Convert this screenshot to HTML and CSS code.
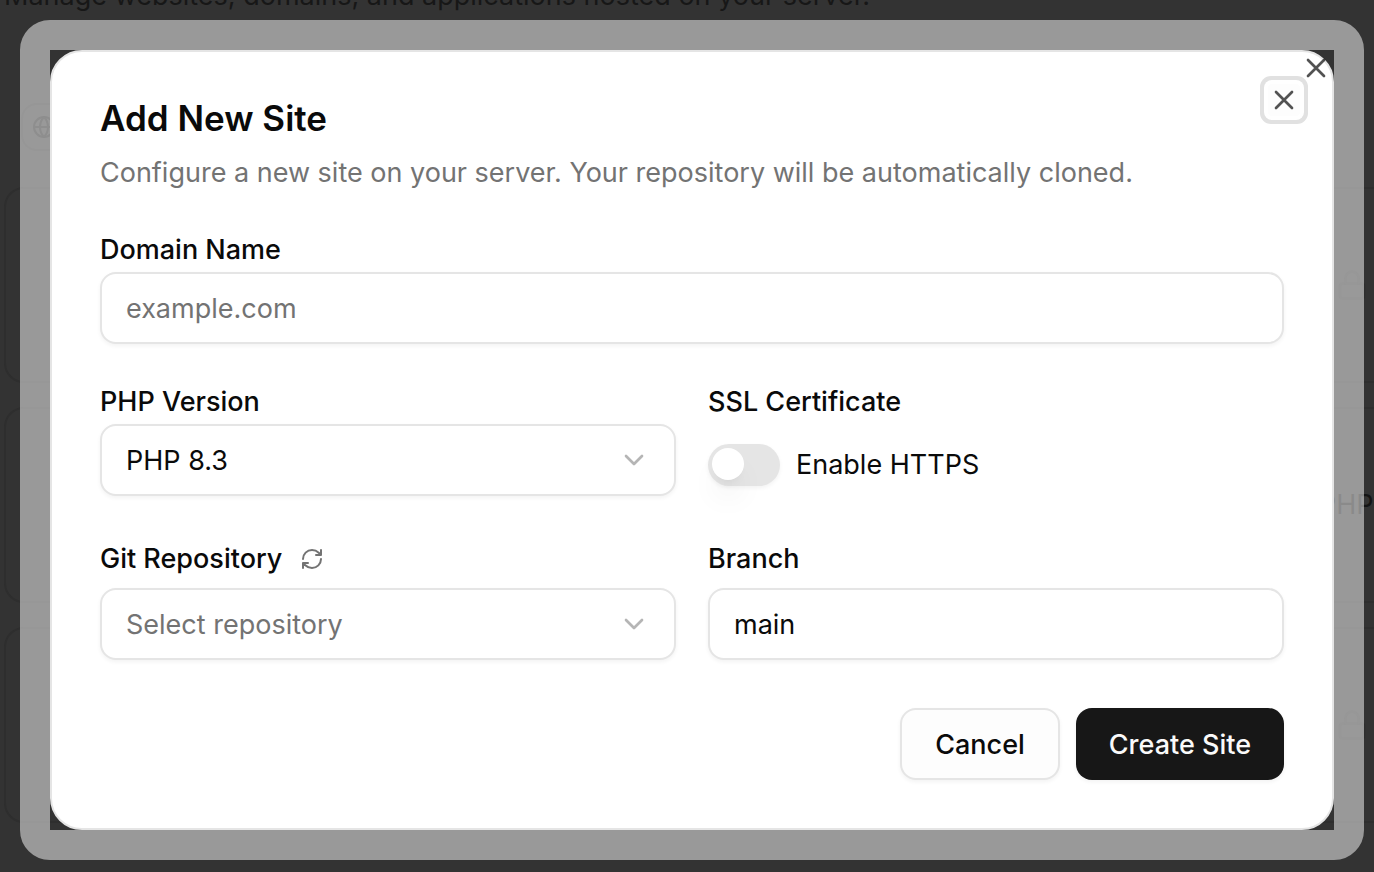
FILE: index.html
```html
<!DOCTYPE html>
<html lang="en">
<head>
<meta charset="utf-8">
<meta name="viewport" content="width=device-width, initial-scale=1">
<title>Add New Site</title>
<link rel="stylesheet" href="styles.css">
</head>
<body>
<div class="page" aria-hidden="true">
  <p class="page-intro">Manage websites, domains, and applications hosted on your server.</p>
  <div class="page-badge">
    <svg class="icon-sm" viewBox="0 0 24 24"><circle cx="12" cy="12" r="10"/><path d="M12 2a14.5 14.5 0 0 0 0 20 14.5 14.5 0 0 0 0-20M2 12h20"/></svg>
  </div>
  <div class="site-list">
    <div class="site-card">
      <svg class="icon site-lock" viewBox="0 0 24 24"><rect x="3" y="11" width="18" height="11" rx="2"/><path d="M7 11V7a5 5 0 0 1 10 0v4"/></svg>
    </div>
    <div class="site-card site-card-text"><span>PHP 8.3</span></div>
    <div class="site-card">
      <svg class="icon site-lock" viewBox="0 0 24 24"><rect x="3" y="11" width="18" height="11" rx="2"/><path d="M7 11V7a5 5 0 0 1 10 0v4"/></svg>
    </div>
  </div>
</div>

<div class="overlay">
  <div class="frame">
    <div class="dialog" role="dialog" aria-modal="true" aria-labelledby="dialog-title" aria-describedby="dialog-text">
      <header class="dialog-header">
        <h2 class="dialog-title" id="dialog-title">Add New Site</h2>
        <p class="dialog-text" id="dialog-text">Configure a new site on your server. Your repository will be automatically cloned.</p>
      </header>

      <form class="form">
        <div class="field field-wide">
          <label class="label" for="domain">Domain Name</label>
          <input class="control" id="domain" type="text" placeholder="example.com">
        </div>

        <div class="field">
          <label class="label" for="php">PHP Version</label>
          <div class="select-wrap">
            <select class="control select" id="php"><option>PHP 8.3</option></select>
            <svg class="icon chevron" viewBox="0 0 24 24"><path d="m6 9 6 6 6-6"/></svg>
          </div>
        </div>
        <div class="field">
          <span class="label">SSL Certificate</span>
          <div class="switch-row">
            <input class="switch" id="https" type="checkbox" role="switch">
            <label class="switch-label" for="https">Enable HTTPS</label>
          </div>
        </div>

        <div class="field field-loose">
          <div class="label-row">
            <label class="label" for="repo">Git Repository</label>
            <button class="refresh" type="button" aria-label="Refresh repositories">
              <svg class="icon-sm" viewBox="0 0 24 24"><path d="M3 12a9 9 0 0 1 9-9 9.75 9.75 0 0 1 6.74 2.74L21 8M21 3v5h-5M21 12a9 9 0 0 1-9 9 9.75 9.75 0 0 1-6.74-2.74L3 16M8 16H3v5"/></svg>
            </button>
          </div>
          <div class="select-wrap">
            <select class="control select select-empty" id="repo"><option>Select repository</option></select>
            <svg class="icon chevron" viewBox="0 0 24 24"><path d="m6 9 6 6 6-6"/></svg>
          </div>
        </div>
        <div class="field field-loose">
          <div class="label-row"><label class="label" for="branch">Branch</label></div>
          <input class="control" id="branch" type="text" value="main">
        </div>
      </form>

      <footer class="dialog-footer">
        <button class="button button-outline" type="button">Cancel</button>
        <button class="button button-primary" type="button">Create Site</button>
      </footer>

      <button class="close close-ring" type="button" aria-label="Close">
        <svg class="icon" viewBox="0 0 24 24"><path d="M18 6 6 18M6 6l12 12"/></svg>
      </button>
      <button class="close close-corner" type="button" aria-label="Close dialog">
        <svg class="icon" viewBox="0 0 24 24"><path d="M18 6 6 18M6 6l12 12"/></svg>
      </button>
    </div>
  </div>
</div>
</body>
</html>
```
FILE: styles.css
```css
* {
  box-sizing: border-box;
}

body {
  margin: 0;
  min-height: 100vh;
  overflow: hidden;
  background: #333;
  color: #0a0a0a;
  font-family: Inter, "Liberation Sans", sans-serif;
  font-size: 27px;
  line-height: 40px;
}

h2,
p {
  margin: 0;
}

button,
input,
select {
  font: inherit;
  color: inherit;
}

svg {
  display: block;
  flex: none;
  fill: none;
  stroke: currentColor;
  stroke-width: 2;
  stroke-linecap: round;
  stroke-linejoin: round;
}

.icon {
  width: 32px;
  height: 32px;
}

.icon-sm {
  width: 24px;
  height: 24px;
}

/* Page behind the dialog */
.page {
  position: absolute;
  inset: 0;
  overflow: hidden;
  padding-left: 4px;
  color: #2e2e2e;
}

.page-intro {
  margin-top: -24px;
  color: #171717;
  white-space: nowrap;
}

.page-badge {
  display: flex;
  align-items: center;
  width: 64px;
  height: 48px;
  margin: 87px 0 36px 17px;
  padding-left: 9px;
  border: 2px solid #2d2d2d;
  border-radius: 16px;
  color: #1c1c1c;
}

.site-list {
  display: grid;
  gap: 24px;
  margin-right: -60px;
}

.site-card {
  display: flex;
  align-items: center;
  justify-content: flex-end;
  height: 196px;
  padding-right: 64px;
  border: 2px solid #2e2e2e;
  border-radius: 20px;
}

.site-card-text {
  padding-right: 11px;
  color: #141414;
}

.site-lock {
  color: #2e2e2e;
}

/* Dialog */
.overlay {
  position: absolute;
  inset: 0;
  padding: 20px 10px 12px 20px;
}

.frame {
  border: 30px solid rgba(255, 255, 255, 0.5);
  border-radius: 30px;
}

.dialog {
  position: relative;
  padding: 48px;
  background: #fff;
  border: 2px solid #e5e5e5;
  border-radius: 32px;
}

.dialog-header {
  display: grid;
  gap: 16px;
  margin-bottom: 40px;
}

.dialog-title {
  font-size: 35px;
  font-weight: 600;
  line-height: 36px;
}

.dialog-text {
  color: #737373;
  line-height: 42px;
}

.form {
  display: grid;
  grid-template-columns: 1fr 1fr;
  gap: 42px 32px;
  margin-bottom: 48px;
}

.field {
  display: flex;
  flex-direction: column;
  gap: 6px;
}

.field-wide {
  grid-column: 1 / -1;
}

.field-loose {
  gap: 18px;
}

.label {
  font-weight: 500;
  line-height: 32px;
}

.label-row {
  display: flex;
  align-items: center;
  gap: 18px;
  height: 22px;
}

.control {
  width: 100%;
  height: 72px;
  padding: 0 24px;
  background: #fff;
  border: 2px solid #e5e5e5;
  border-radius: 16px;
  box-shadow: 0 2px 4px rgba(0, 0, 0, 0.05);
}

.control::placeholder {
  color: #737373;
  opacity: 1;
}

.select-wrap {
  position: relative;
}

.select {
  display: block;
  appearance: none;
  padding-top: 2px;
}

.select-empty {
  color: #737373;
}

.chevron {
  position: absolute;
  top: 20px;
  right: 26px;
  color: #b5b5b5;
  pointer-events: none;
}

.switch-row {
  display: flex;
  align-items: center;
  gap: 16px;
  height: 82px;
}

.switch {
  appearance: none;
  width: 72px;
  height: 42px;
  margin: 0;
  padding: 4px;
  background: #e5e5e5;
  border-radius: 21px;
  box-shadow: 0 2px 4px rgba(0, 0, 0, 0.05);
}

.switch::before {
  content: "";
  display: block;
  width: 32px;
  height: 32px;
  background: #fff;
  border-radius: 50%;
  box-shadow: 0 20px 30px -6px rgba(0, 0, 0, 0.1), 0 8px 12px -8px rgba(0, 0, 0, 0.1);
}

.refresh {
  padding: 0;
  background: none;
  border: 0;
  color: #737373;
}

.dialog-footer {
  display: flex;
  justify-content: flex-end;
  gap: 16px;
}

.button {
  height: 72px;
  padding: 2px 33px 0;
  border: 0;
  border-radius: 16px;
  font-weight: 500;
  box-shadow: 0 2px 4px rgba(0, 0, 0, 0.05);
}

.button-outline {
  background: #fdfdfd;
  border: 2px solid #e5e5e5;
}

.button-primary {
  background: #171717;
  color: #fafafa;
}

.close {
  position: absolute;
  padding: 0;
  background: none;
  border: 0;
  border-radius: 4px;
}

.close svg {
  opacity: 0.7;
}

.close-ring {
  top: 32px;
  right: 32px;
  background: #fdfdfd;
  box-shadow: 0 0 0 4px #fff, 0 0 0 8px #e1e1e1;
}

.close-corner {
  top: 0;
  right: 0;
}
```
